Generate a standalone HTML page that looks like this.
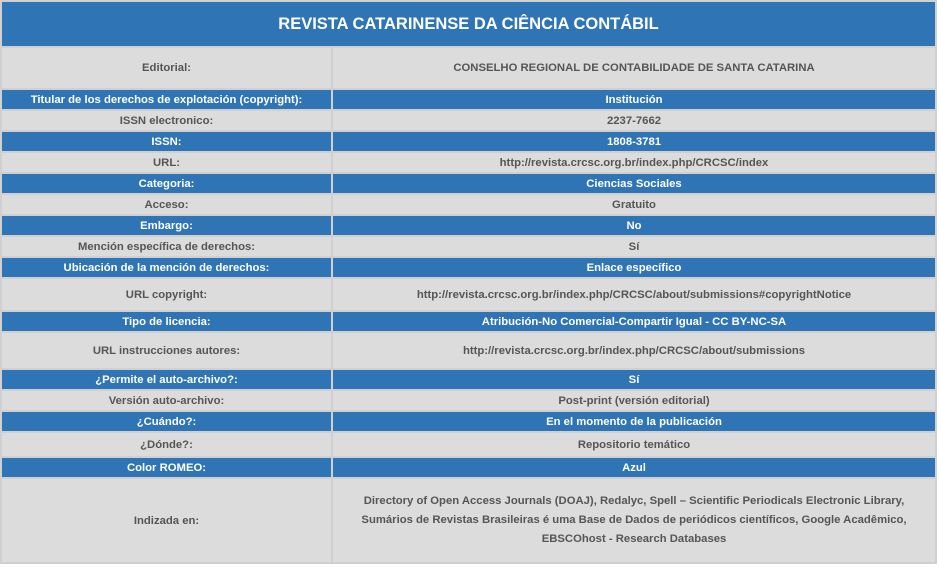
<!DOCTYPE html><html><head><style>
body{margin:0;background:#fff;}
table{position:absolute;left:0;top:0;width:937px;border-collapse:separate;border-spacing:2px;background:#d0d0d0;font:bold 11.3px "Liberation Sans",Arial,sans-serif;color:#555;}
td{padding:0;text-align:center;background:#dcdcdc;}
tr.b td{background:#2f74b5;color:#fff;}
td.l{width:329px;}
th{background:#2f74b5;color:#fff;font-size:16.5px;height:44px;padding:0;}
</style></head><body>
<table>
<tr><th colspan="2">REVISTA CATARINENSE DA CIÊNCIA CONTÁBIL</th></tr>
<tr style="height:40px"><td class="l">Editorial:</td><td>CONSELHO REGIONAL DE CONTABILIDADE DE SANTA CATARINA</td></tr>
<tr class="b" style="height:19px"><td class="l">Titular de los derechos de explotación (copyright):</td><td>Institución</td></tr>
<tr style="height:19px"><td class="l">ISSN electronico:</td><td>2237-7662</td></tr>
<tr class="b" style="height:19px"><td class="l">ISSN:</td><td>1808-3781</td></tr>
<tr style="height:19px"><td class="l">URL:</td><td>http://revista.crcsc.org.br/index.php/CRCSC/index</td></tr>
<tr class="b" style="height:19px"><td class="l">Categoria:</td><td>Ciencias Sociales</td></tr>
<tr style="height:19px"><td class="l">Acceso:</td><td>Gratuito</td></tr>
<tr class="b" style="height:19px"><td class="l">Embargo:</td><td>No</td></tr>
<tr style="height:19px"><td class="l">Mención específica de derechos:</td><td>Sí</td></tr>
<tr class="b" style="height:19px"><td class="l">Ubicación de la mención de derechos:</td><td>Enlace específico</td></tr>
<tr style="height:31px"><td class="l">URL copyright:</td><td>http://revista.crcsc.org.br/index.php/CRCSC/about/submissions#copyrightNotice</td></tr>
<tr class="b" style="height:19px"><td class="l">Tipo de licencia:</td><td>Atribución-No Comercial-Compartir Igual - CC BY-NC-SA</td></tr>
<tr style="height:35px"><td class="l">URL instrucciones autores:</td><td>http://revista.crcsc.org.br/index.php/CRCSC/about/submissions</td></tr>
<tr class="b" style="height:19px"><td class="l">¿Permite el auto-archivo?:</td><td>Sí</td></tr>
<tr style="height:19px"><td class="l">Versión auto-archivo:</td><td>Post-print (versión editorial)</td></tr>
<tr class="b" style="height:19px"><td class="l">¿Cuándo?:</td><td>En el momento de la publicación</td></tr>
<tr style="height:23px"><td class="l">¿Dónde?:</td><td>Repositorio temático</td></tr>
<tr class="b" style="height:19px"><td class="l">Color ROMEO:</td><td>Azul</td></tr>
<tr style="height:83px"><td class="l">Indizada en:</td><td style="line-height:19px">Directory of Open Access Journals (DOAJ), Redalyc, Spell – Scientific Periodicals Electronic Library,<br>Sumários de Revistas Brasileiras é uma Base de Dados de periódicos científicos, Google Acadêmico,<br>EBSCOhost - Research Databases</td></tr>
</table>
</body></html>
